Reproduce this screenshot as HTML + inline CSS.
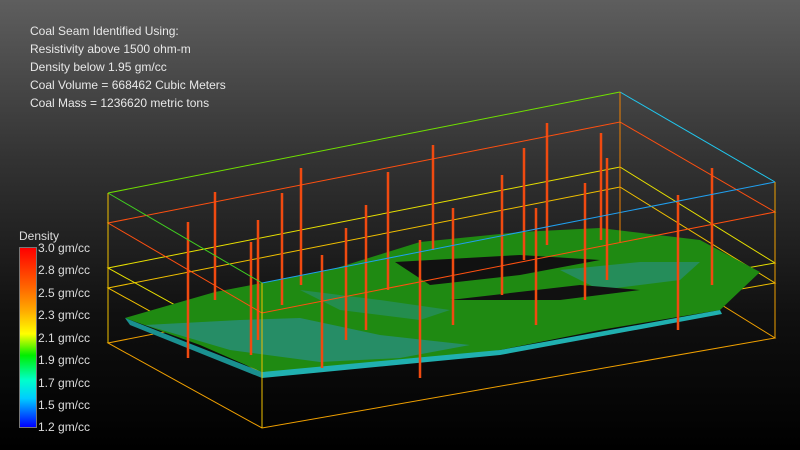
<!DOCTYPE html>
<html><head><style>
body{margin:0;width:800px;height:450px;overflow:hidden;background:linear-gradient(#5e5e5e 0%,#333 35%,#101010 70%,#000 100%);font-family:"Liberation Sans",sans-serif;}
.t{position:absolute;left:30px;color:#e8e8e8;font-size:12px;}
.l{position:absolute;left:38px;color:#ddd;font-size:12px;}
</style></head><body>
<div class="t" style="top:24px">Coal Seam Identified Using:</div>
<div class="t" style="top:42px">Resistivity above 1500 ohm-m</div>
<div class="t" style="top:60px">Density below 1.95 gm/cc</div>
<div class="t" style="top:78px">Coal Volume = 668462 Cubic Meters</div>
<div class="t" style="top:96px">Coal Mass = 1236620 metric tons</div>
<div style="position:absolute;left:19px;top:229px;color:#ddd;font-size:12px">Density</div>
<div style="position:absolute;left:19px;top:247px;width:16px;height:179px;border:1px solid #777;background:linear-gradient(#f00 0%,#f60 22%,#fa0 35%,#ff0 48%,#0e0 60%,#0fc 74%,#0cf 84%,#06f 92%,#00f 100%)"></div>
<div class="l" style="top:241px">3.0 gm/cc</div>
<div class="l" style="top:263px">2.8 gm/cc</div>
<div class="l" style="top:286px">2.5 gm/cc</div>
<div class="l" style="top:308px">2.3 gm/cc</div>
<div class="l" style="top:331px">2.1 gm/cc</div>
<div class="l" style="top:353px">1.9 gm/cc</div>
<div class="l" style="top:376px">1.7 gm/cc</div>
<div class="l" style="top:398px">1.5 gm/cc</div>
<div class="l" style="top:420px">1.2 gm/cc</div>
<svg style="position:absolute;left:0;top:0" width="800" height="450">
<g fill="none" stroke-width="1">
<polygon points="108,343 620,242 775,338 262,428" stroke="#f0a000"/>
<polygon points="108,288 620,187 775,283 262,373" stroke="#f0c000"/>
<polygon points="108,268 620,167 775,263 262,353" stroke="#e8e000"/>
</g>
<polygon points="125,318 215,292 330,270 420,242 520,232 600,228 700,240 760,272 720,310 600,330 500,350 420,362 262,372 200,345" fill="#1f8a12"/>
<polygon points="145,325 230,350 320,362 400,358 470,345 380,335 300,318 240,320" fill="#2a8f8a" opacity="0.7"/>
<polygon points="300,290 380,300 450,310 420,320 340,310" fill="#2a8f8a" opacity="0.5"/>
<polygon points="560,270 640,262 700,262 680,280 600,290" fill="#2a8f8a" opacity="0.6"/>
<polygon points="395,262 520,255 600,260 520,275 430,285" fill="#111"/>
<polygon points="450,300 580,285 640,290 560,300" fill="#111"/>
<polygon points="262,372 500,350 720,310 722,314 500,355 262,378" fill="#20b0b0"/>
<polygon points="125,318 262,372 262,378 130,325" fill="#1a9090"/>
<g stroke="#f04a10" stroke-width="2.5">
<line x1="188" y1="222" x2="188" y2="358"/><line x1="215" y1="192" x2="215" y2="300"/>
<line x1="251" y1="242" x2="251" y2="355"/><line x1="258" y1="220" x2="258" y2="340"/>
<line x1="282" y1="193" x2="282" y2="305"/><line x1="301" y1="168" x2="301" y2="285"/>
<line x1="322" y1="255" x2="322" y2="368"/><line x1="346" y1="228" x2="346" y2="340"/>
<line x1="366" y1="205" x2="366" y2="330"/><line x1="388" y1="172" x2="388" y2="290"/>
<line x1="420" y1="240" x2="420" y2="378"/><line x1="433" y1="145" x2="433" y2="250"/>
<line x1="453" y1="208" x2="453" y2="325"/><line x1="502" y1="175" x2="502" y2="295"/>
<line x1="524" y1="148" x2="524" y2="260"/><line x1="536" y1="208" x2="536" y2="325"/>
<line x1="547" y1="123" x2="547" y2="245"/><line x1="585" y1="183" x2="585" y2="300"/>
<line x1="601" y1="133" x2="601" y2="240"/><line x1="607" y1="158" x2="607" y2="280"/>
<line x1="678" y1="195" x2="678" y2="330"/><line x1="712" y1="168" x2="712" y2="285"/>
</g>
<g fill="none" stroke-width="1">
<polygon points="108,223 620,122 775,212 262,313" stroke="#ff5010"/>
<line x1="108" y1="193" x2="620" y2="92" stroke="#70e000"/>
<line x1="620" y1="92" x2="775" y2="182" stroke="#20c8f0"/>
<line x1="108" y1="193" x2="262" y2="283" stroke="#40d020"/>
<line x1="262" y1="283" x2="775" y2="182" stroke="#20a0f0"/>
<line x1="108" y1="193" x2="108" y2="343" stroke="#f0c000"/>
<line x1="262" y1="283" x2="262" y2="428" stroke="#f0c000"/>
<line x1="775" y1="182" x2="775" y2="338" stroke="#f0a000"/>
<line x1="620" y1="92" x2="620" y2="242" stroke="#f08000"/>
</g>
</svg>
</body></html>
